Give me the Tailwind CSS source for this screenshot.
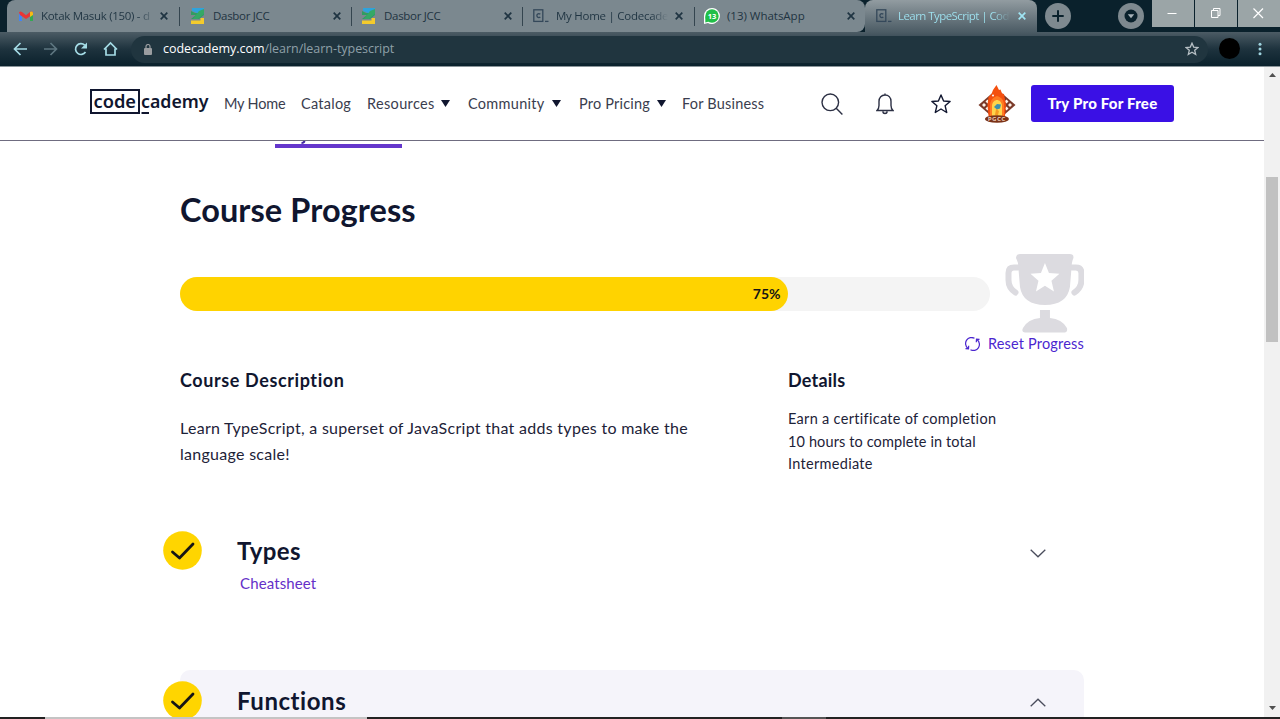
<!DOCTYPE html>
<html lang="en">
<head>
<meta charset="utf-8">
<title>Learn TypeScript | Codecademy</title>
<script src="https://cdn.jsdelivr.net/npm/@tailwindcss/browser@4"></script>
</head>
<body class="w-[1280px] h-[719px] overflow-hidden bg-white font-['Lato',sans-serif] text-[#10162f]">
<svg class="hidden">
  <symbol id="x" viewBox="0 0 8 8"><path d="M.7.7l6.6 6.6M7.3.7L.7 7.3" stroke="currentColor" stroke-width="1.7" fill="none"/></symbol>
  <symbol id="jcc" viewBox="0 0 14 16"><path d="M1 0h12v5H6L1 3z" fill="#2ea3dc"/><path d="M0 3l4 2h9v2L8 11H0l5-4H0z" fill="#2f9d62"/><path d="M8 3l5-2v5L7 11H2z" fill="#35a866"/><path d="M0 12.500h9.500V10H13v6H0z" fill="#f4cb2c"/></symbol>
  <symbol id="cc" viewBox="0 0 16 14"><rect x=".8" y=".8" width="9" height="11.6" fill="none" stroke="#34485a" stroke-width="1.3"/><path d="M7.3 5.2a2 2 0 1 0 0 2.8" fill="none" stroke="#34485a" stroke-width="1.3"/><path d="M12 12.4h3.5" stroke="#34485a" stroke-width="1.3"/></symbol>
  <symbol id="check" viewBox="0 0 39 39"><circle cx="19.5" cy="19.5" r="19.3" fill="#ffd500"/><path d="M9.500 21l7 6L30 13" fill="none" stroke="#151515" stroke-width="2.8" stroke-linecap="round" stroke-linejoin="round"/></symbol>
</svg>

<!-- browser tabs -->
<div class="h-[32px] bg-[#0a212c] flex font-['Open_Sans',sans-serif] text-[11.5px] tracking-[-0.3px] text-[#1f3442] whitespace-nowrap">
  <div class="w-[858px] ml-[7px] bg-[#7b888f] rounded-t-lg rounded-br-lg flex items-center shrink-0">
    <div class="w-[172px] h-full flex items-center pl-[12px] pr-[11px] shrink-0">
      <svg class="w-[14px] h-[11px] mr-[8px]" viewBox="0 0 14 11"><path d="M0 1.500V10h3V4.800z" fill="#4285f4"/><path d="M14 1.500V10h-3V4.800z" fill="#34a853"/><path d="M0 1.500Q1-.3 3 1l4 3.200L11 1q2-1.300 3 .5L13 4 7 8 1 4z" fill="#ea3535"/><path d="M11 1q2-1.300 3 .5V4l-3 2z" fill="#f5bb16"/></svg>
      <div class="w-[114px] overflow-hidden bg-gradient-to-r from-[#1f3442] from-85% to-transparent bg-clip-text text-transparent">Kotak Masuk (150) - d</div>
      <svg class="w-2 h-2 ml-auto"><use href="#x"/></svg>
    </div>
    <div class="w-px h-[19px] bg-[#34454f]"></div>
    <div class="w-[171px] h-full flex items-center pl-[11px] pr-[10px] shrink-0"><svg class="w-[14px] h-[16px] mr-[8px]"><use href="#jcc"/></svg>Dasbor JCC<svg class="w-2 h-2 ml-auto"><use href="#x"/></svg></div>
    <div class="w-px h-[19px] bg-[#34454f]"></div>
    <div class="w-[170px] h-full flex items-center pl-[10px] pr-[10px] shrink-0"><svg class="w-[14px] h-[16px] mr-[8px]"><use href="#jcc"/></svg>Dasbor JCC<svg class="w-2 h-2 ml-auto"><use href="#x"/></svg></div>
    <div class="w-px h-[19px] bg-[#34454f]"></div>
    <div class="w-[171px] h-full flex items-center pl-[10px] pr-[11px] shrink-0"><svg class="w-[16px] h-[14px] mr-[7px] shrink-0"><use href="#cc"/></svg><div class="w-[112px] bg-gradient-to-r from-[#1f3442] from-85% to-transparent bg-clip-text text-transparent tracking-[-0.260px]">My Home | Codecader</div><svg class="w-2 h-2 ml-auto"><use href="#x"/></svg></div>
    <div class="w-px h-[19px] bg-[#34454f]"></div>
    <div class="flex-1 h-full flex items-center pl-[9px] pr-[10px]"><svg class="w-[16px] h-[16px] mr-[7px]" viewBox="0 0 16 16"><path d="M8 0a8 8 0 1 1-4 15L0 16V8a8 8 0 0 1 8-8z" fill="#fff"/><circle cx="8" cy="8" r="6.700" fill="#20bf48"/><path d="M1.300 8v6.500L5 13.500z" fill="#20bf48"/><text x="8" y="10.800" font-size="7.500" font-weight="700" fill="#fff" text-anchor="middle" letter-spacing="0">13</text></svg><span class="tracking-[-0.020px]">(13) WhatsApp</span><svg class="w-2 h-2 ml-auto"><use href="#x"/></svg></div>
  </div>
  <div class="w-[172px] rounded-t-lg bg-gradient-to-b from-[#929ca1] to-[#4c5c65] flex items-center pl-[11px] pr-[11px] text-[#9fe4f2] shrink-0"><svg class="w-[16px] h-[14px] mr-[6px] shrink-0"><use href="#cc"/></svg><div class="w-[112px] bg-gradient-to-r from-[#9fe4f2] from-85% to-transparent bg-clip-text text-transparent tracking-[-0.560px]">Learn TypeScript | Cod</div><svg class="w-2 h-2 ml-auto"><use href="#x"/></svg></div>
  <svg class="w-[115px] h-[32px] shrink-0" viewBox="0 0 115 32"><circle cx="21" cy="16" r="13" fill="#7e898f"/><path d="M21 10.300v11.400M15.300 16h11.400" stroke="#0a212c" stroke-width="2"/><circle cx="94" cy="16" r="13" fill="#7e898f"/><circle cx="94" cy="16" r="6.500" fill="#0a212c"/><path d="M90.800 14.300h6.400l-3.200 4z" fill="#a7b2b8"/></svg>
  <div class="flex gap-px h-[27px] text-white">
    <svg class="w-[42px] h-[27px] bg-[#9ba5a7]" viewBox="0 0 42 27"><path d="M15.500 13.500h9" stroke="#fff"/></svg>
    <svg class="w-[42px] h-[27px] bg-[#9ba5a7]" viewBox="0 0 42 27"><path d="M16.500 10.500h6.500v7h-6.500zM18.500 10.500v-2h6.500v7h-2" stroke="#fff" fill="none"/></svg>
    <svg class="w-[42px] h-[27px] bg-[#9ba5a7]" viewBox="0 0 42 27"><path d="M15.500 8.500l9.500 9.500M25 8.500L15.500 18" stroke="#fff" stroke-width="1.200"/></svg>
  </div>
</div>

<!-- browser toolbar -->
<div class="h-[35px] border-b border-[#8a959a] bg-gradient-to-b from-[#4c5c65] via-[#1e333e] via-50% to-[#0a212c] flex items-center">
  <svg class="w-[131px] h-[34px] shrink-0" viewBox="0 0 131 34" fill="none" stroke="#a5dce6" stroke-width="1.700"><path d="M27 17H15M20.500 11L14.500 17l6 6"/><path d="M44 17h12M50.500 11l6 6-6 6" stroke="#5e7680"/><path d="M85.500 20a5.400 5.400 0 1 1-.8-6.800"/><path d="M87 10.500v6h-6z" fill="#a5dce6" stroke="none"/><path d="M104 17.500l6.500-6.500 6.500 6.500M106 16.500v6.500h9v-6.500"/></svg>
  <div class="w-[1077px] h-[27px] rounded-full bg-[#20353f] flex items-center pl-[13px] pr-[9px] font-['Open_Sans',sans-serif] text-[12.500px] text-[#8fa0a8]">
    <svg class="w-[8px] h-[11px] mr-[11px]" viewBox="0 0 8 11"><rect y="4" width="8" height="7" rx="1" fill="#9a9da0"/><path d="M2 4V2.500a2 2 0 0 1 4 0V4" fill="none" stroke="#9a9da0" stroke-width="1.200"/></svg>
    <span class="tracking-[-0.040px]"><span class="text-white">codecademy.com</span>/learn/learn-typescript</span>
    <svg class="w-[14px] h-[14px] ml-auto" viewBox="0 0 14 14"><path d="M7 1.200l1.700 3.900 4.200.4-3.200 2.800 1 4.200L7 10.300l-3.700 2.200 1-4.200L1.100 5.500l4.200-.4z" fill="none" stroke="#b7c0c5" stroke-width="1.300"/></svg>
  </div>
  <svg class="w-[72px] h-[34px]" viewBox="0 0 72 34"><circle cx="21.500" cy="16.500" r="10.500" fill="#000"/><g fill="#9fd4df"><circle cx="52" cy="12.200" r="1.500"/><circle cx="52" cy="17" r="1.500"/><circle cx="52" cy="21.800" r="1.500"/></g></svg>
</div>

<div class="flex h-[650px]">
  <div class="w-[1264px] overflow-hidden flex flex-col shrink-0">
    <!-- site header -->
    <header class="h-[74px] shrink-0 border-b border-[#6f6c80] flex items-center pl-[90px] text-[14.500px] text-[#3a3d4e] whitespace-nowrap">
      <svg class="w-[120px] h-[30px] mr-[14px] shrink-0 overflow-visible" viewBox="0 0 120 30"><rect x="1" y="1" width="48" height="23" fill="none" stroke="#10162f" stroke-width="2"/><g font-family="'Noto Sans'" font-weight="600" font-size="18.500" fill="#10162f"><text x="3.500" y="19" textLength="42.500" lengthAdjust="spacingAndGlyphs">code</text><text x="51" y="19" textLength="67.500" lengthAdjust="spacingAndGlyphs">cademy</text></g><path d="M51.500 24h7.500" stroke="#10162f" stroke-width="2"/></svg>
      <nav class="flex items-center w-[597px] shrink-0">
        <a class="w-[77px] tracking-[-0.200px]">My Home</a>
        <a class="w-[65px] tracking-[0.250px]">Catalog</a>
        <a class="w-[102px] flex items-center justify-between pr-[18px] pl-px tracking-[0.350px]">Resources <svg class="w-[9px] h-[7px]" viewBox="0 0 9 7"><path d="M0 0h9L4.500 7z" fill="#10162f"/></svg></a>
        <a class="w-[110px] flex items-center justify-between pr-[17px] tracking-[0.300px]">Community <svg class="w-[9px] h-[7px]" viewBox="0 0 9 7"><path d="M0 0h9L4.500 7z" fill="#10162f"/></svg></a>
        <a class="w-[104px] flex items-center justify-between pr-[16px] pl-px tracking-[0.200px]">Pro Pricing <svg class="w-[9px] h-[7px]" viewBox="0 0 9 7"><path d="M0 0h9L4.500 7z" fill="#10162f"/></svg></a>
        <a class="tracking-[0.200px]">For Business</a>
      </nav>
      <svg class="w-[22px] h-[22px] shrink-0" viewBox="0 0 22 22" fill="none" stroke="#2c3044" stroke-width="1.400"><circle cx="9.300" cy="9.300" r="8.300"/><path d="M15.200 15.200l6.200 6.200"/></svg>
      <svg class="w-[18px] h-[22px] ml-[32.500px] shrink-0" viewBox="0 0 18 22" fill="none" stroke="#2c3044" stroke-width="1.400"><path d="M1 17.500h16c-1.500-1.500-2-3-2-5V8.500C15 4.500 12.500 2 9 2S3 4.500 3 8.500v4c0 2-.5 3.500-2 5zM9 2V.5M6.700 18.500c.5 2.700 4.100 2.700 4.600 0"/></svg>
      <svg class="w-[20px] h-[20px] ml-[37px] shrink-0" viewBox="0 0 20 20" fill="none" stroke="#10162f" stroke-width="1.400" stroke-linejoin="round"><path d="M10 1l2.600 6 6.500.5-5 4.200 1.600 6.800L10 15l-5.700 3.500 1.600-6.800-5-4.200L7.400 7z"/></svg>
      <svg class="w-[38px] h-[38px] ml-[27px] mr-[15.500px] shrink-0" viewBox="0 0 38 38">
        <path d="M19 4l18.500 16L19 36 .5 20z" fill="#7b3a2a"/>
        <path d="M4 20l2-2 2 2-2 2zM7.500 16.500l2-2 2 2-2 2zM7.500 23.500l2-2 2 2-2 2zM34 20l-2-2-2 2 2 2zM30.500 16.500l-2-2-2 2 2 2zM30.500 23.500l-2-2-2 2 2 2z" fill="#fff3ea"/>
        <path d="M18.500 0l2.500 5 1.500-.5 1.500 4 2 .5c.5 4 1.500 7 2 11l-1 11H10.500L9.500 20l1-8 3-3 1.500-4z" fill="#f4500f"/>
        <path d="M12 31V19c1-5 4-7 7-8 4 1 7 4 7 9v11z" fill="#ff7a22"/><path d="M14 31V21c0-4 3-6 5-6s5 2 5 6v10z" fill="#ffd44b"/><path d="M16 22l3-3 4 .5-1 4-3 1z" fill="#3f91ad"/><path d="M18 24l3 2-1 4h-3z" fill="#f49b22"/><circle cx="15" cy="10.500" r="1" fill="#fff"/>
        <ellipse cx="19" cy="34" rx="12" ry="3.800" fill="#7b3217"/><text x="19" y="36" font-family="Lato" font-size="5.500" font-weight="900" fill="#f5d9c5" text-anchor="middle" letter-spacing=".8">PGCC</text>
      </svg>
      <button class="w-[143px] h-[37px] rounded-[3px] bg-[#3a10e5] text-white font-black text-[15px] tracking-[0.220px] shrink-0">Try Pro For Free</button>
    </header>

    <!-- active syllabus tab, partly under the header -->
    <div class="h-[7px] shrink-0 ml-[275px] w-[127px] flex flex-col justify-between"><svg class="w-[8px] h-[3px] ml-[24px]" viewBox="0 0 8 3"><path d="M5.500 0Q5 2 2.500 2" stroke="#3f27a0" stroke-width="2" fill="none"/></svg><div class="h-[4px] bg-[#6436cc]"></div></div>

    <main class="ml-[180px] w-[904px] shrink-0">
      <h1 class="mt-[40px] h-[44px] leading-[44px] text-[32.500px] font-bold tracking-[0.070px] whitespace-nowrap">Course Progress</h1>
      <div class="mt-[20px] h-[82px] flex">
        <div class="mt-[25px] w-[811px] h-[34px] rounded-full bg-[#f4f4f4]"><div class="h-full rounded-full bg-[#ffd300] flex items-center justify-end pr-[7px] pb-[2px] text-[14px] font-bold text-[#151515]" style="width:75%">75%</div></div>
        <svg class="w-[79px] h-[79px] ml-[15px] mt-[2px]" viewBox="0 0 79 79" fill="#dcdbe0"><path d="M15 0h50q4 0 3.500 4-1 2-1.500 5l-2 24Q62 51 40 51T15 33L13 9Q12 6 11 4 11 0 15 0z"/><path d="M13 13.500H9Q3.500 13.500 3.500 19v7q0 8 7 12.500M67 13.500h4q5.500 0 5.500 5.500v7q0 8-7 12.500" fill="none" stroke="#dcdbe0" stroke-width="6" stroke-linecap="round"/><path d="M35 56h10v8q12 1 17 10 1 4-2 4.500H20q-4-.5-2-4.500 5-9 17-10z"/><path d="M40 9l4 10 10.500.8-8 7 2.500 10.700-9-5.700-9 5.700 2.500-10.700-8-7L36 19z" fill="#fff"/></svg>
      </div>
      <div class="h-[20px] flex justify-end items-center text-[14.500px] text-[#4b26cf] whitespace-nowrap"><svg class="w-[15px] h-[14px] mr-[8px]" viewBox="0 0 15 14" fill="none" stroke="#4b26cf" stroke-width="1.200"><path d="M2.800 11.200A6 6 0 0 1 9.500 1.300M12.200 2.800A6 6 0 0 1 5.500 12.700M.5 11.700l3 .2.200-3.200M14.500 2.300l-3-.2-.2 3.200"/></svg><span class="tracking-[0.180px]">Reset Progress</span></div>

      <div class="mt-[13px] flex">
        <section class="w-[608px]">
          <h2 class="h-[26px] leading-[26px] text-[18px] font-bold tracking-[0.600px]">Course Description</h2>
          <p class="mt-[22px] text-[16px] leading-[26px] tracking-[0.285px] whitespace-nowrap text-[#1d2238]">Learn TypeScript, a superset of JavaScript that adds types to make the<br>language scale!</p>
        </section>
        <section>
          <h2 class="h-[26px] leading-[26px] text-[18px] font-bold tracking-[0.200px]">Details</h2>
          <p class="mt-[15px] text-[14.500px] leading-[22.500px] tracking-[0.300px] whitespace-nowrap text-[#1d2238]"><span>Earn a certificate of completion</span><br><span class="tracking-[0.120px]">10 hours to complete in total</span><br>Intermediate</p>
        </section>
      </div>

      <section class="mt-[47px] h-[147px] flex -ml-[17px]">
        <svg class="w-[39px] h-[39px] mt-[8px]"><use href="#check"/></svg>
        <div class="ml-[35px] pt-[13px]"><h3 class="h-[30px] leading-[30px] text-[24px] font-bold tracking-[0.400px]">Types</h3><a class="block ml-[3px] mt-[7px] leading-[20px] text-[15px] tracking-[0.120px] text-[#6430c8]">Cheatsheet</a></div>
        <svg class="w-[16px] h-[9px] mt-[26px] ml-auto mr-[38px]" viewBox="0 0 16 9"><path d="M.7.700L8 7.800 15.300.700" fill="none" stroke="#4a4d5c" stroke-width="1.300"/></svg>
      </section>
      <section class="h-[60px] rounded-t-[10px] bg-[#f5f4fa] flex">
        <svg class="w-[39px] h-[39px] mt-[11px] -ml-[17px]"><use href="#check"/></svg>
        <h3 class="ml-[35px] mt-[16px] h-[30px] leading-[30px] text-[24px] font-bold tracking-[0.560px]">Functions</h3>
        <svg class="w-[16px] h-[9px] mt-[28px] ml-auto mr-[38px]" viewBox="0 0 16 9"><path d="M.7 8.300L8 1.200l7.300 7.100" fill="none" stroke="#4a4d5c" stroke-width="1.300"/></svg>
      </section>
    </main>
  </div>
  <!-- scrollbar -->
  <div class="w-[16px] bg-[#f1f1f1] flex flex-col items-center">
    <svg class="w-[7px] h-[4px] mt-[6px]" viewBox="0 0 7 4"><path d="M0 4h7L3.500 0z" fill="#505050"/></svg>
    <div class="w-[12px] h-[165px] mt-[100px] bg-[#c1c1c1]"></div>
    <svg class="w-[7px] h-[4px] mt-auto mb-[7px]" viewBox="0 0 7 4"><path d="M0 0h7L3.500 4z" fill="#505050"/></svg>
  </div>
</div>
<div class="h-[2px] bg-[#222] flex"><div class="ml-[45px] w-[322px] bg-[#c4c4c4]"></div><div class="ml-[415px] w-[44px] bg-[#555]"></div></div>
</body>
</html>
